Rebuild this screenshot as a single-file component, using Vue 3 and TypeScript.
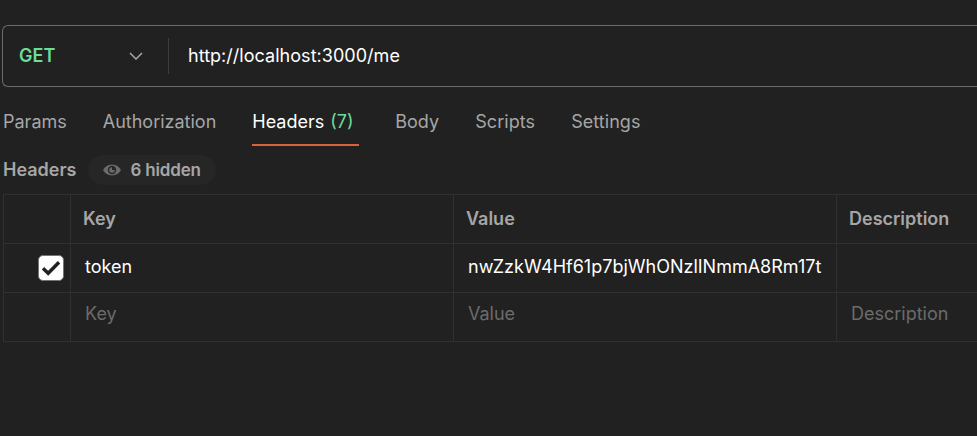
<script setup lang="ts">
interface Tab {
  label: string
  count?: number
}

interface HeaderRow {
  key: string
  value: string
  description: string
  enabled: boolean
}

const method = 'GET'
const url = 'http://localhost:3000/me'
const activeTab = 'Headers'
const hiddenCount = 6

const tabs: Tab[] = [
  { label: 'Params' },
  { label: 'Authorization' },
  { label: 'Headers', count: 7 },
  { label: 'Body' },
  { label: 'Scripts' },
  { label: 'Settings' },
]

const rows: HeaderRow[] = [
  { key: 'token', value: 'nwZzkW4Hf61p7bjWhONzlINmmA8Rm17t', description: '', enabled: true },
]
</script>

<template>
  <main class="request">
    <div class="url-bar">
      <div class="method">
        <span class="method-name">{{ method }}</span>
        <svg class="chevron" width="14" height="8" viewBox="0 0 14 8">
          <path d="M1 1l6 6 6-6" fill="none" stroke="currentColor" stroke-width="1.5" />
        </svg>
      </div>
      <div class="url">{{ url }}</div>
    </div>

    <nav class="tabs">
      <a v-for="tab in tabs" :key="tab.label" class="tab" :class="{ active: tab.label === activeTab }">
        <span>{{ tab.label }}</span>
        <span v-if="tab.count" class="count">({{ tab.count }})</span>
      </a>
    </nav>

    <div class="section">
      <span class="section-title">Headers</span>
      <span class="pill">
        <svg class="eye" width="18" height="12" viewBox="0 0 18 12">
          <path
            fill="currentColor"
            fill-rule="evenodd"
            d="M0 6C1.800 2.600 5 .5 9 .5S16.200 2.600 18 6c-1.800 3.400-5 5.500-9 5.500S1.800 9.400 0 6zm9-4.200a4.200 4.200 0 1 0 0 8.400 4.200 4.200 0 0 0 0-8.400zM9 3.200V6h2.800A2.800 2.800 0 1 1 9 3.200z"
          />
        </svg>
        <span>{{ hiddenCount }} hidden</span>
      </span>
    </div>

    <div class="table">
      <div class="row head">
        <div class="cell check"></div>
        <div class="cell">Key</div>
        <div class="cell">Value</div>
        <div class="cell">Description</div>
      </div>
      <div v-for="row in rows" :key="row.key" class="row">
        <div class="cell check">
          <span v-if="row.enabled" class="checkbox">
            <svg width="20" height="16" viewBox="0 0 20 16">
              <path d="M2 8.300l5.200 5L18 2.300" fill="none" stroke="currentColor" stroke-width="3.400" />
            </svg>
          </span>
        </div>
        <div class="cell">{{ row.key }}</div>
        <div class="cell">{{ row.value }}</div>
        <div class="cell">{{ row.description }}</div>
      </div>
      <div class="row placeholder">
        <div class="cell check"></div>
        <div class="cell">Key</div>
        <div class="cell">Value</div>
        <div class="cell">Description</div>
      </div>
    </div>
  </main>
</template>

<style>
body {
  background: #212121;
  overflow: hidden;
}
</style>

<style scoped>
.request {
  box-sizing: border-box;
  width: 977px;
  height: 436px;
  padding-top: 25px;
  overflow: hidden;
  background: #212121;
  color: #fff;
  font: 400 18px/24px Inter, sans-serif;
  white-space: nowrap;
}

.url-bar {
  box-sizing: border-box;
  display: flex;
  align-items: center;
  height: 62px;
  margin-left: 2px;
  border: 1px solid #6b6b6b;
  border-right: 0;
  border-radius: 6px 0 0 6px;
}

.method {
  box-sizing: border-box;
  display: flex;
  align-items: center;
  justify-content: space-between;
  width: 166px;
  height: 36px;
  padding: 0 25px 0 16px;
  border-right: 1px solid #3d3d3d;
  color: #6bdd9a;
  font-weight: 600;
}

.chevron {
  color: #a6a6a6;
}

.url {
  padding-left: 19px;
  letter-spacing: 0.03px;
}

.tabs {
  display: flex;
  gap: 36px;
  height: 36px;
  margin: 23px 0 0 3px;
}

.tab {
  box-sizing: border-box;
  display: flex;
  gap: 6px;
  height: 36px;
  color: #a6a6a6;
}

.tab.active {
  margin-right: 0.6px;
  padding-right: 5px;
  border-bottom: 2px solid #d9623b;
  color: #fff;
}

.active ~ .tab {
  letter-spacing: 0.06px;
}

.count {
  color: #6bdd9a;
}

.section {
  display: flex;
  align-items: center;
  gap: 12px;
  height: 30px;
  margin: 9px 0 9px 3px;
  color: #a6a6a6;
  font-weight: 600;
}

.pill {
  display: flex;
  align-items: center;
  gap: 10px;
  height: 30px;
  margin-left: -1px;
  padding: 0 15px;
  border-radius: 15px;
  background: #262626;
  font-size: 17px;
  letter-spacing: -0.18px;
}

.eye {
  color: #6b6b6b;
}

.table {
  margin-left: 3px;
  border-top: 1px solid #303030;
  border-left: 1px solid #303030;
}

.row {
  display: grid;
  grid-template-columns: 67px 383px 383px 1fr;
  height: 49px;
}

.cell {
  box-sizing: border-box;
  padding: 11px 0 0 14px;
  border-right: 1px solid #303030;
  border-bottom: 1px solid #303030;
}

.cell:last-child {
  border-right: 0;
}

.head .cell {
  padding: 12px 0 0 12px;
  color: #a6a6a6;
  font-weight: 600;
}

.placeholder .cell {
  padding-top: 9px;
  color: #6b6b6b;
}

.check {
  display: flex;
  justify-content: flex-end;
  padding-right: 6px;
}

.checkbox {
  box-sizing: border-box;
  display: flex;
  align-items: center;
  justify-content: center;
  width: 26px;
  height: 26px;
  border: 1px solid #757575;
  border-radius: 5px;
  background: #fff;
  color: #212121;
}
</style>
